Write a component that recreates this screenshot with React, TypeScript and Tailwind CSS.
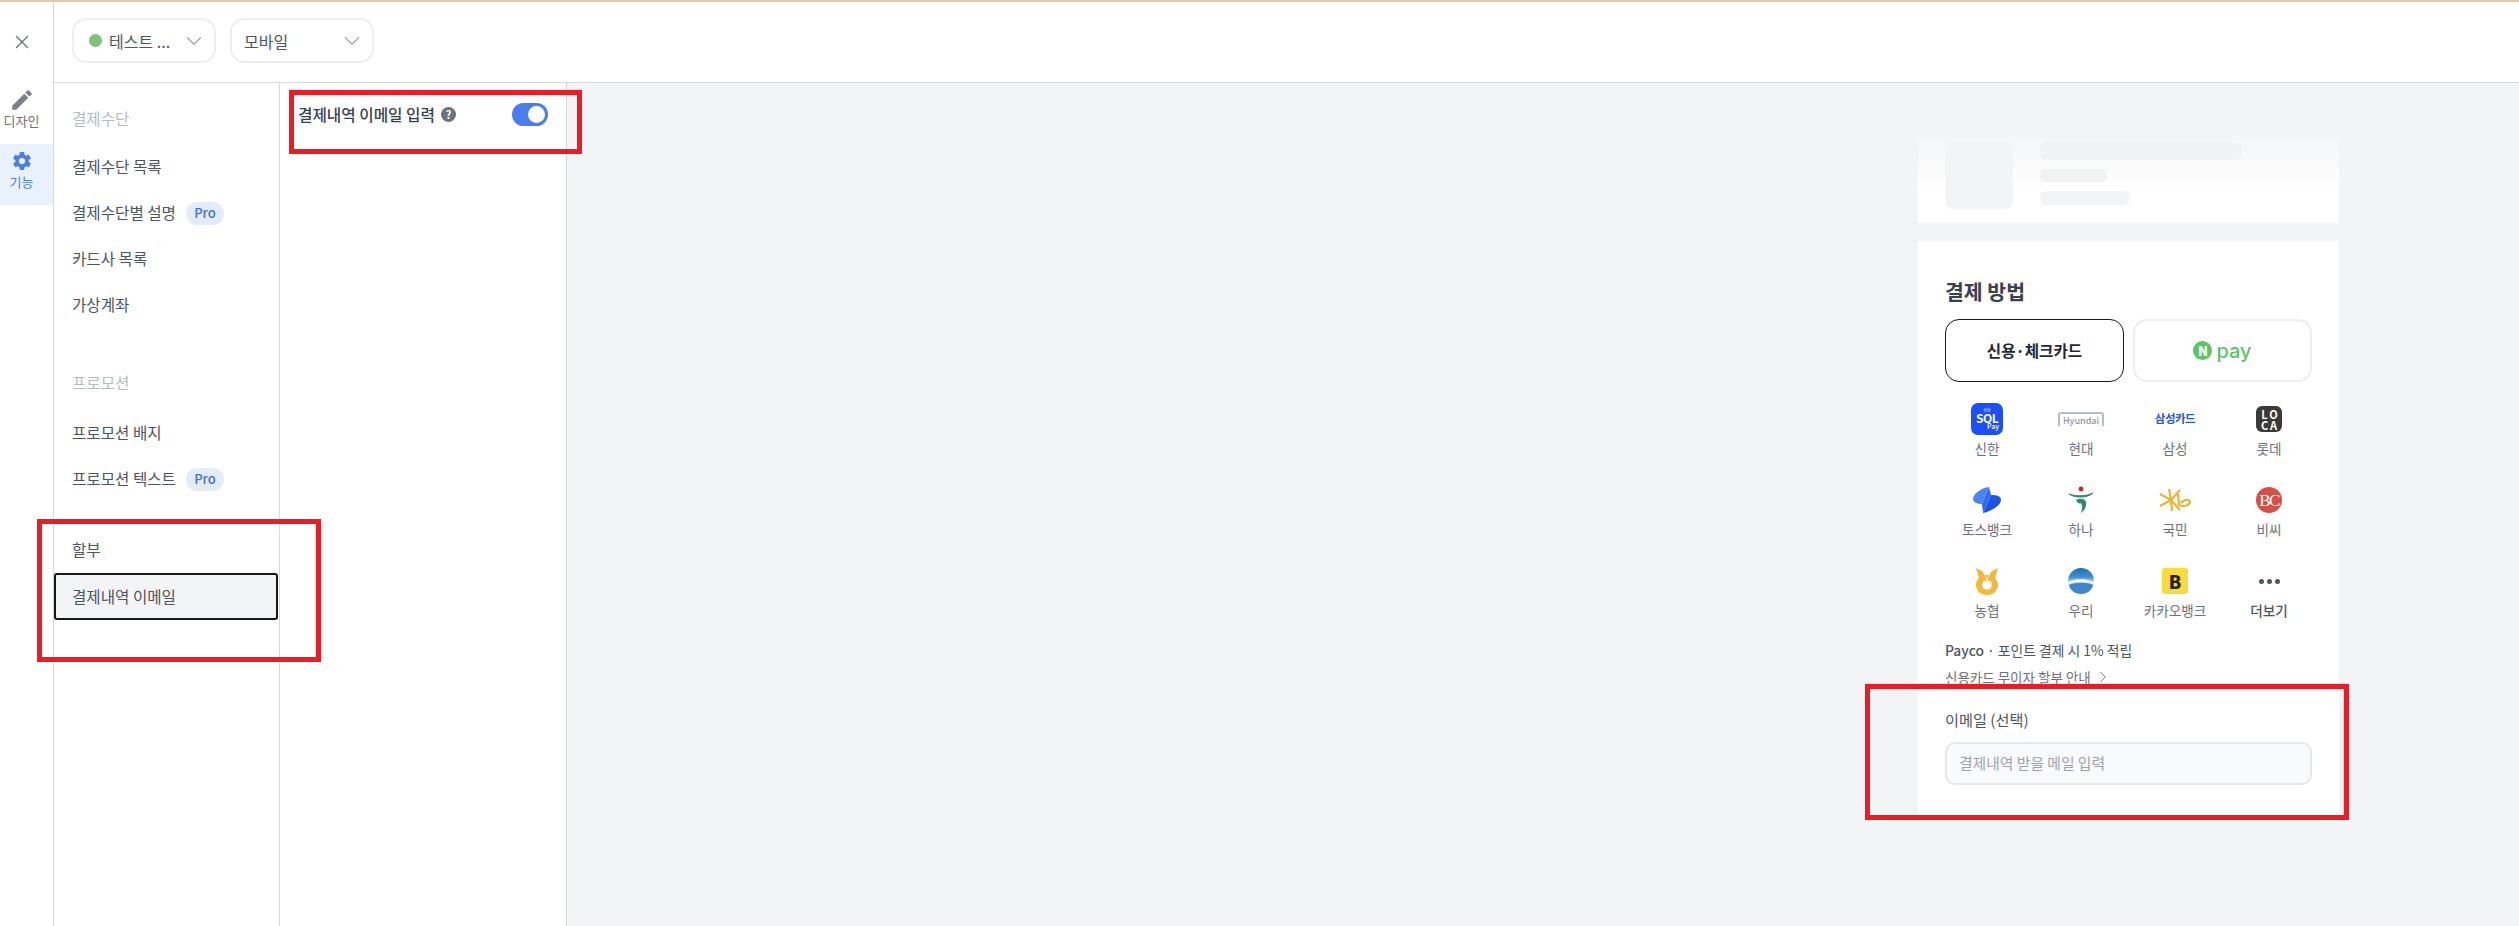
import React from 'react'
import { ChevronDown, ChevronRight, X } from 'lucide-react'
import { MdEdit } from 'react-icons/md'
import { IoSettingsSharp } from 'react-icons/io5'

const ProBadge = () => (
    <span className="ml-[10px] flex h-[23px] w-[38px] items-center justify-center rounded-full bg-[#e4ecfc] text-[13px] font-medium text-[#3f6fd8]">Pro</span>
)

const MenuItem = ({ label, pro, active }: { label: string; pro?: boolean; active?: boolean }) => (
    <div className={active
        ? "flex h-[47px] w-[224px] items-center rounded-[3px] border-2 border-[#17181c] bg-[#f3f4f6] pl-[16px] text-[15.6px] text-[#4b5563]"
        : "flex h-[46px] items-center pl-[18px] text-[15.6px] text-[#4b5563]"}>
        {label}
        {pro && <ProBadge />}
    </div>
)

const MenuTitle = ({ label }: { label: string }) => (
    <div className="flex h-[46px] items-center pl-[18px] text-[15.6px] text-[#b6bbc4]">{label}</div>
)

const SelectBox = ({ label, dot }: { label: string; dot?: boolean }) => (
    <div className="flex h-[45px] w-[144px] items-center rounded-[14px] border-2 border-[#eceef1] bg-white pl-[12px] pr-[7px] text-[16px] text-[#4b5563]">
        {dot && <span className="mr-[7px] ml-[3px] h-[13px] w-[13px] rounded-full bg-[#7fc378]"></span>}
        <span className="flex-1">{label}</span>
        <ChevronDown size={26} strokeWidth={1.3} className="text-[#a3a9b3]" />
    </div>
)

const ShinhanLogo = () => (
    <div className="relative flex h-[32px] w-[32px] flex-col items-center justify-center rounded-[7px] bg-[#1a50f5] leading-none text-white">
        <span className="text-[4px]">신한</span>
        <span className="text-[12px] font-bold leading-[11px] tracking-[-0.5px]">SOL</span>
        <span className="self-end pr-[4px] text-[7px] font-medium">Pay</span>
    </div>
)

const HyundaiLogo = () => (
    <div className="flex h-[14px] w-[46px] items-center justify-center rounded-t-[3px] border-x-2 border-t-2 border-[#b6bcc7] pt-[1px] text-[9px] font-medium text-[#8f96a3]">Hyundai</div>
)

const LocaLogo = () => (
    <div className="grid h-[26px] w-[26px] grid-cols-2 place-items-center rounded-[6px] bg-[#3d3a36] px-[4px] py-[2px] text-[11px] font-bold leading-[10px] text-white">
        <span>L</span><span>O</span><span>C</span><span>A</span>
    </div>
)

const TossLogo = () => (
    <svg width="30" height="28" viewBox="0 0 30 28">
        <path d="M17 1C9 2 1 8 1 13c0 3 4 5 9 5z" fill="#4a86f5" />
        <path d="M11 27c9-2 18-8 18-13 0-4-4-5-10-5z" fill="#1b54e8" />
        <path d="M17 1l2 8-8 18-1-9z" fill="#2f6af0" />
    </svg>
)

const HanaLogo = () => (
    <svg width="26" height="28" viewBox="0 0 26 28">
        <circle cx="13" cy="3" r="2.4" fill="#c8231f" />
        <path d="M1 8c7 2.500 17 2.500 24-1-5 5-18 5.500-24 1z" fill="#2f8a6a" stroke="#2f8a6a" strokeWidth="1" />
        <path d="M8 14c3-2 9-2 10 2 .8 4-1 8-5 11 1-4 2-7 0-10-1 1-3 1-5-3z" fill="#2f8a6a" />
    </svg>
)

const KbLogo = () => (
    <svg width="32" height="22" viewBox="0 0 32 22" fill="none" stroke="#ecb335" strokeWidth="2.200">
        <path d="M10 0l2 11 1 11M1 5l11 6-11 6M21 1 12 11l9 10" />
        <path d="M19 5l1 11c4 2 10 1 11-3 0-3-6-3-9 1" />
    </svg>
)

const BcLogo = () => (
    <div className="relative flex h-[26px] w-[26px] items-center justify-center overflow-hidden rounded-full bg-[#d64f45] text-[17px] leading-none tracking-[-1.5px] text-white">
        <span className="font-['Liberation_Serif',serif]">BC</span>
    </div>
)

const NhLogo = () => (
    <svg width="22" height="27" viewBox="0 0 22 27">
        <path d="M11 7C4 7 0 12 0 17c0 6 5 10 11 10s11-4 11-10c0-5-4-10-11-10zm0 5.500c3 0 5 2 5 4.500s-2 4.500-5 4.500-5-2-5-4.500 2-4.500 5-4.500z" fill="#f2b73c" />
        <path d="M0 0l6 3 5 7 5-7 6-3-3 10h-16z" fill="#f2b73c" />
        <path d="M7 3l4 8 4-8-4 10z" fill="#fff" />
    </svg>
)

const WooriLogo = () => (
    <svg width="26" height="26" viewBox="0 0 26 26">
        <defs>
            <linearGradient id="wooriTop" x1="0" y1="0" x2="0" y2="1">
                <stop offset="0" stopColor="#1f6fb8" />
                <stop offset="0.35" stopColor="#3f8fd0" />
                <stop offset="0.55" stopColor="#bfe2f5" />
            </linearGradient>
        </defs>
        <circle cx="13" cy="13" r="13" fill="url(#wooriTop)" />
        <path d="M0 15c5-5 21-5 26 0v1c-6-3-20-3-26 0z" fill="#fff" />
        <path d="M1 17c5-3 19-3 24 0-1 5-6 9-12 9S2 22 1 17z" fill="#3d86cb" />
    </svg>
)

const KakaoLogo = () => (
    <div className="flex h-[26px] w-[26px] items-center justify-center rounded-[3px] bg-[#f7dc3c] text-[18px] font-black text-[#24211c]">B</div>
)

const MoreDots = () => (
    <div className="flex gap-[3px]">
        <span className="h-[5px] w-[5px] rounded-full bg-[#4b5563]"></span>
        <span className="h-[5px] w-[5px] rounded-full bg-[#4b5563]"></span>
        <span className="h-[5px] w-[5px] rounded-full bg-[#4b5563]"></span>
    </div>
)

const banks: { label: string; logo: React.ReactNode; strong?: boolean }[] = [
    { label: '신한', logo: <ShinhanLogo /> },
    { label: '현대', logo: <HyundaiLogo /> },
    { label: '삼성', logo: <span className="text-[11.500px] font-bold tracking-[-0.5px] text-[#2a55d8]">삼성카드</span> },
    { label: '롯데', logo: <LocaLogo /> },
    { label: '토스뱅크', logo: <TossLogo /> },
    { label: '하나', logo: <HanaLogo /> },
    { label: '국민', logo: <KbLogo /> },
    { label: '비씨', logo: <BcLogo /> },
    { label: '농협', logo: <NhLogo /> },
    { label: '우리', logo: <WooriLogo /> },
    { label: '카카오뱅크', logo: <KakaoLogo /> },
    { label: '더보기', logo: <MoreDots />, strong: true },
]

const App = () => {
    return (
        <div className="relative flex h-[926px] w-[2519px] flex-col overflow-hidden bg-white font-['Noto_Sans_CJK_KR','Noto_Sans',sans-serif]">
            <div className="h-[2px] bg-[#e6c9a3]"></div>
            <div className="flex min-h-0 flex-1">
                {/* Rail */}
                <div className="flex w-[54px] flex-col border-r border-[#d6d8dc]">
                    <div className="flex h-[80px] items-center justify-center pr-[10px]">
                        <X size={22} strokeWidth={1.5} className="text-[#6b7280]" />
                    </div>
                    <div className="flex h-[62px] flex-col items-center justify-start pr-[10px] pt-[5px] text-[13px] leading-[16px] text-[#6b7280]">
                        <MdEdit size={26} className="text-[#7b818b]" />
                        디자인
                    </div>
                    <div className="flex h-[61px] flex-col items-center justify-start bg-[#e9f1fd] pr-[10px] pt-[7px] text-[13px] leading-[16px] text-[#4a7eef]">
                        <IoSettingsSharp size={20} className="mb-[3px]" />
                        기능
                    </div>
                </div>

                <div className="flex min-w-0 flex-1 flex-col">
                    {/* Header */}
                    <div className="flex h-[81px] shrink-0 items-center gap-[14px] border-b border-[#d6d8dc] pb-[3px] pl-[18px]">
                        <SelectBox label="테스트 ..." dot />
                        <SelectBox label="모바일" />
                    </div>

                    <div className="flex min-h-0 flex-1">
                        {/* Menu */}
                        <div className="w-[226px] shrink-0 border-r border-[#d6d8dc] pt-[13px]">
                            <MenuTitle label="결제수단" />
                            <div className="mt-[2px]">
                                <MenuItem label="결제수단 목록" />
                                <MenuItem label="결제수단별 설명" pro />
                                <MenuItem label="카드사 목록" />
                                <MenuItem label="가상계좌" />
                            </div>
                            <div className="mt-[32px]">
                                <MenuTitle label="프로모션" />
                            </div>
                            <div className="mt-[4px]">
                                <MenuItem label="프로모션 배지" />
                                <MenuItem label="프로모션 텍스트" pro />
                            </div>
                            <div className="mt-[25px]">
                                <MenuItem label="할부" />
                                <MenuItem label="결제내역 이메일" active />
                            </div>
                        </div>

                        {/* Options panel */}
                        <div className="w-[287px] shrink-0 border-r border-[#d6d8dc] pl-[18px] pr-[18px] pt-[20px]">
                            <div className="flex h-[23px] items-center">
                                <span className="text-[15.7px] font-medium text-[#374151]">결제내역 이메일 입력</span>
                                <span className="ml-[6px] flex h-[15px] w-[15px] items-center justify-center rounded-full bg-[#6b7280] text-[11px] font-bold text-white">?</span>
                                <div className="ml-auto flex h-[23px] w-[36px] items-center justify-end rounded-full bg-[#4a7eef] pr-[3px]">
                                    <span className="h-[17px] w-[17px] rounded-full bg-white"></span>
                                </div>
                            </div>
                        </div>

                        {/* Preview */}
                        <div className="flex flex-1 justify-end bg-[#f3f4f6] pr-[180px] pt-[47px]">
                            <div className="flex w-[421px] flex-col gap-[18px]">
                                <div className="flex h-[93px] gap-[27px] bg-[linear-gradient(180deg,#f3f4f6_0%,#ffffff_65%)] pl-[27px] pt-[12px]">
                                    <div className="h-[67px] w-[68px] rounded-lg bg-[#f3f4f6]"></div>
                                    <div className="flex flex-col items-start gap-[9px]">
                                        <div className="h-[18px] w-[202px] rounded-md bg-[#f1f2f4]"></div>
                                        <div className="h-[13px] w-[67px] rounded-md bg-[#f1f2f4]"></div>
                                        <div className="h-[14px] w-[90px] rounded-md bg-[#f3f4f6]"></div>
                                    </div>
                                </div>

                                <div className="bg-white px-[27px] pb-[30px] pt-[36px]">
                                    <div className="text-[20.5px] font-semibold leading-[28px] text-[#374151]">결제 방법</div>
                                    <div className="mt-[14px] grid grid-cols-2 gap-[9px]">
                                        <div className="flex h-[63px] items-center justify-center rounded-[14px] border border-[#17181c] text-[15.6px] font-semibold text-[#1f2937]">신용·체크카드</div>
                                        <div className="flex h-[63px] items-center justify-center gap-[4px] rounded-[14px] border-2 border-[#eceef1]">
                                            <span className="flex h-[19px] w-[19px] items-center justify-center rounded-full bg-[#5cc463] text-[13px] font-black text-white">N</span>
                                            <span className="font-['Inter',sans-serif] text-[20px] font-medium leading-none text-[#5cc463]">pay</span>
                                        </div>
                                    </div>

                                    <div className="ml-[-5px] mt-[21px] grid w-[376px] grid-cols-4 gap-y-[26px]">
                                        {banks.map(bank => (
                                            <div key={bank.label} className="flex flex-col items-center">
                                                <div className="flex h-[32px] items-center justify-center">{bank.logo}</div>
                                                <div className={bank.strong
                                                    ? "mt-[3px] text-[13.6px] font-medium leading-[20px] text-[#4b5563]"
                                                    : "mt-[3px] text-[13.6px] leading-[20px] text-[#6b7280]"}>{bank.label}</div>
                                            </div>
                                        ))}
                                    </div>

                                    <div className="mt-[20px] text-[13.8px] leading-[20px] text-[#4b5563]">
                                        <span className="font-medium">Payco</span> · 포인트 결제 시 1% 적립
                                    </div>
                                    <div className="mt-[7px] flex items-center text-[13.5px] leading-[20px] text-[#6b7280]">
                                        신용카드 무이자 할부 안내
                                        <ChevronRight size={18} strokeWidth={1.3} className="ml-[3px]" />
                                    </div>

                                    <div className="mt-[22px] text-[15.2px] leading-[20px] text-[#4b5563]">이메일 (선택)</div>
                                    <div className="mt-[13px] flex h-[43px] items-center rounded-[10px] border-2 border-[#e5e7eb] bg-[#f9fafb] pl-[12px] text-[14.8px] text-[#9ca3af]">결제내역 받을 메일 입력</div>
                                </div>
                            </div>
                        </div>
                    </div>
                </div>
            </div>

            {/* Red annotation boxes */}
            <div className="absolute left-[289px] top-[90px] h-[64px] w-[293px] border-[5px] border-[#ed1c24]"></div>
            <div className="absolute left-[37px] top-[519px] h-[143px] w-[284px] border-[5px] border-[#ed1c24]"></div>
            <div className="absolute left-[1865px] top-[684px] h-[136px] w-[484px] border-[5px] border-[#ed1c24]"></div>
        </div>
    )
}

export default App
